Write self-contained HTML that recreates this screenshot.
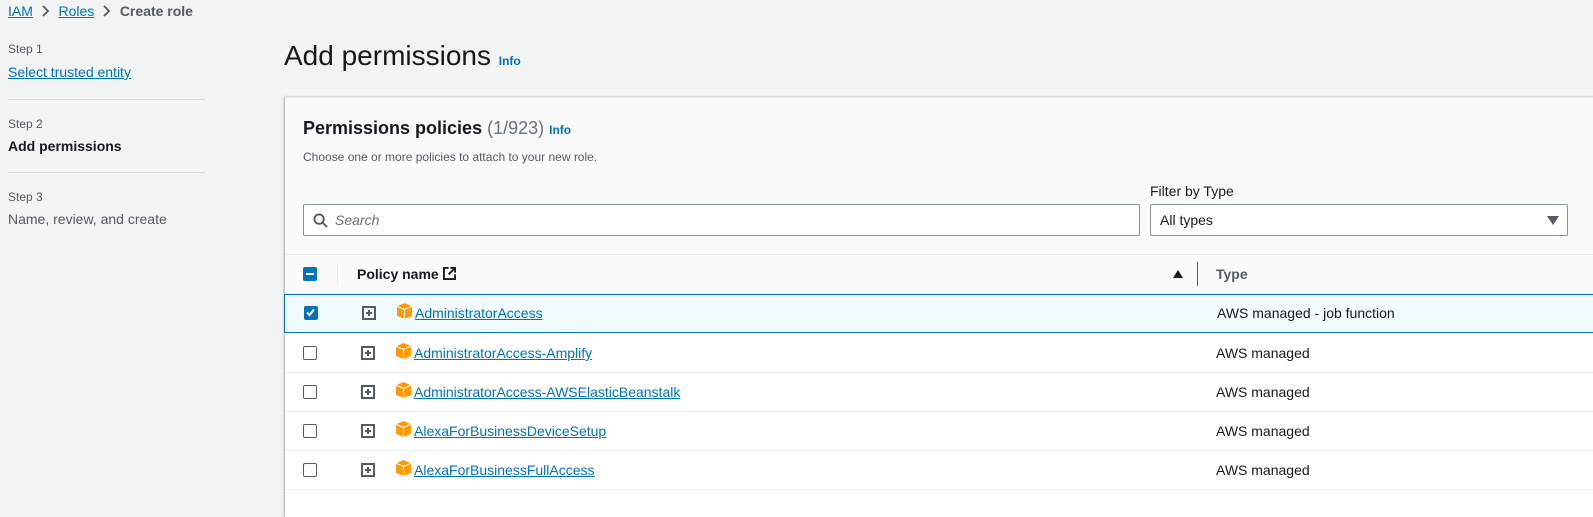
<!DOCTYPE html>
<html><head><meta charset="utf-8"><style>
*{box-sizing:border-box;margin:0;padding:0}
body{width:1593px;height:494px;overflow:hidden;background:#f2f3f3;font-family:"Liberation Sans",sans-serif;color:#16191f;position:relative}
a{color:#0073bb;text-decoration:underline}
.abs{position:absolute}
.bc{top:3px;left:8px;font-size:14px;color:#545b64}
.step{font-size:12px;color:#545b64;left:8px}
.side-hr{left:8px;width:197px;height:1px;background:#d5dbdb}
h1{position:absolute;left:284px;top:40px;font-size:28px;font-weight:400;color:#16191f}
.info{color:#0073bb;font-weight:700;font-size:12px}
.panel{left:285px;top:97px;width:1320px;height:420px;background:#fff;box-shadow:-1px 0 2px rgba(0,28,36,.3);border-top:1px solid #eaeded}
.phead{left:0;top:0;width:100%;height:156px;background:#fafafa}
.input{background:#fff;border:1px solid #879596;border-radius:2px;height:32px}
.th{top:156px;left:0;width:100%;height:40px;background:#fafafa;border-bottom:1px solid #eaeded;border-top:1px solid #eaeded}
.row{left:0;width:100%;height:39px;border-bottom:1px solid #eaeded;font-size:14px}
.row .cb{position:absolute;left:18px;top:12px;width:14px;height:14px;border:1.5px solid #545b64;border-radius:2px;background:#fff}
.row .pl{position:absolute;left:76px;top:12px}
.row .cube{position:absolute;left:110px;top:8px}
.row a{position:absolute;left:129px;top:11px}
.row .t{position:absolute;left:931px;top:11px}
</style></head><body>
<div class="abs bc"><a style="color:#0073bb">IAM</a>&nbsp; <svg width="10" height="12" viewBox="0 0 10 12" style="vertical-align:-1px"><path d="M2 1l5 5-5 5" fill="none" stroke="#545b64" stroke-width="1.8"/></svg>&nbsp; <a>Roles</a>&nbsp; <svg width="10" height="12" viewBox="0 0 10 12" style="vertical-align:-1px"><path d="M2 1l5 5-5 5" fill="none" stroke="#545b64" stroke-width="1.8"/></svg>&nbsp; <b style="color:#545b64">Create role</b></div>
<div class="abs step" style="top:42px">Step 1</div>
<div class="abs" style="top:64px;left:8px;font-size:14px"><a>Select trusted entity</a></div>
<div class="abs side-hr" style="top:99px"></div>
<div class="abs step" style="top:117px">Step 2</div>
<div class="abs" style="top:138px;left:8px;font-size:14px;font-weight:700">Add permissions</div>
<div class="abs side-hr" style="top:172px"></div>
<div class="abs step" style="top:190px">Step 3</div>
<div class="abs" style="top:211px;left:8px;font-size:14px;color:#545b64">Name, review, and create</div>
<h1>Add permissions <span class="info">Info</span></h1>
<div class="abs panel">
 <div class="abs phead">
  <div class="abs" style="left:18px;top:20px;font-size:18px;font-weight:700">Permissions policies <span style="font-weight:400;color:#687078">(1/923)</span> <span class="info">Info</span></div>
  <div class="abs" style="left:18px;top:52px;font-size:12px;color:#545b64">Choose one or more policies to attach to your new role.</div>
  <div class="abs input" style="left:18px;top:106px;width:837px"><svg class="abs" style="left:9px;top:8px" width="15" height="15" viewBox="0 0 16 16"><circle cx="6.5" cy="6.5" r="5" fill="none" stroke="#545b64" stroke-width="2"/><path d="M10 10l5 5" stroke="#545b64" stroke-width="2"/></svg><span class="abs" style="left:31px;top:7px;font-size:14px;font-style:italic;color:#687078">Search</span></div>
  <div class="abs" style="left:865px;top:85px;font-size:14px">Filter by Type</div>
  <div class="abs input" style="left:865px;top:106px;width:418px"><span class="abs" style="left:9px;top:7px;font-size:14px">All types</span><span class="abs" style="right:8px;top:11px;width:0;height:0;border-left:6px solid transparent;border-right:6px solid transparent;border-top:9px solid #545b64"></span></div>
 </div>
 <div class="abs th">
  <div class="abs" style="left:18px;top:12px;width:14px;height:14px;background:#0073bb;border-radius:2px"><div style="position:absolute;left:3px;top:6px;width:8px;height:2px;background:#fff"></div></div>
  <div class="abs" style="left:52px;top:8px;width:1px;height:22px;background:#eaeded"></div>
  <div class="abs" style="left:72px;top:11px;font-size:14px;font-weight:700">Policy name <svg width="13" height="13" viewBox="0 0 14 14" style="vertical-align:-1px"><path d="M6 1H1v12h12V8M8 1h5v5M13 1L6 8" fill="none" stroke="#16191f" stroke-width="2"/></svg></div>
  <div class="abs" style="left:888px;top:15px;width:0;height:0;border-left:5px solid transparent;border-right:5px solid transparent;border-bottom:8px solid #16191f"></div>
  <div class="abs" style="left:912px;top:7px;width:1px;height:24px;background:#545b64"></div>
  <div class="abs" style="left:931px;top:11px;font-size:14px;font-weight:700;color:#545b64">Type</div>
 </div>
 <div class="abs row" style="top:196px;background:#f1faff;border:1px solid #0073bb;left:-1px;width:1321px">
  <div class="cb" style="background:#0073bb;border-color:#0073bb;left:19px;top:11px"><svg style="position:absolute;left:0;top:0" width="11" height="11" viewBox="0 0 11 11"><path d="M2 5.5l2.5 2.5 4.5-5.5" fill="none" stroke="#fff" stroke-width="2"/></svg></div>
  <svg class="pl" style="left:77px;top:11px" width="14" height="14" viewBox="0 0 14 14"><rect x="1" y="1" width="12" height="12" fill="none" stroke="#545b64" stroke-width="2"/><path d="M4 7h6M7 4v6" stroke="#545b64" stroke-width="2"/></svg>
  <svg class="cube" style="left:111px;top:7px" width="17" height="17" viewBox="0 0 16 16"><path d="M8 1l7 3v9l-7 3-7-3V4z" fill="#f90"/><path d="M1 4l7 3 7-3M8 7v9" stroke="#fff" stroke-width="1" fill="none"/></svg>
  <a style="left:130px;top:10px">AdministratorAccess</a><span class="t" style="left:932px;top:10px">AWS managed - job function</span>
 </div>
 <div class="abs row" style="top:236px"><div class="cb"></div><svg class="pl" width="14" height="14" viewBox="0 0 14 14"><rect x="1" y="1" width="12" height="12" fill="none" stroke="#545b64" stroke-width="2"/><path d="M4 7h6M7 4v6" stroke="#545b64" stroke-width="2"/></svg><svg class="cube" width="17" height="17" viewBox="0 0 16 16"><path d="M8 1l7 3v9l-7 3-7-3V4z" fill="#f90"/><path d="M1 4l7 3 7-3M8 7v9" stroke="#fff" fill="none"/></svg><a>AdministratorAccess-Amplify</a><span class="t">AWS managed</span></div>
 <div class="abs row" style="top:275px"><div class="cb"></div><svg class="pl" width="14" height="14" viewBox="0 0 14 14"><rect x="1" y="1" width="12" height="12" fill="none" stroke="#545b64" stroke-width="2"/><path d="M4 7h6M7 4v6" stroke="#545b64" stroke-width="2"/></svg><svg class="cube" width="17" height="17" viewBox="0 0 16 16"><path d="M8 1l7 3v9l-7 3-7-3V4z" fill="#f90"/><path d="M1 4l7 3 7-3M8 7v9" stroke="#fff" fill="none"/></svg><a>AdministratorAccess-AWSElasticBeanstalk</a><span class="t">AWS managed</span></div>
 <div class="abs row" style="top:314px"><div class="cb"></div><svg class="pl" width="14" height="14" viewBox="0 0 14 14"><rect x="1" y="1" width="12" height="12" fill="none" stroke="#545b64" stroke-width="2"/><path d="M4 7h6M7 4v6" stroke="#545b64" stroke-width="2"/></svg><svg class="cube" width="17" height="17" viewBox="0 0 16 16"><path d="M8 1l7 3v9l-7 3-7-3V4z" fill="#f90"/><path d="M1 4l7 3 7-3M8 7v9" stroke="#fff" fill="none"/></svg><a>AlexaForBusinessDeviceSetup</a><span class="t">AWS managed</span></div>
 <div class="abs row" style="top:353px"><div class="cb"></div><svg class="pl" width="14" height="14" viewBox="0 0 14 14"><rect x="1" y="1" width="12" height="12" fill="none" stroke="#545b64" stroke-width="2"/><path d="M4 7h6M7 4v6" stroke="#545b64" stroke-width="2"/></svg><svg class="cube" width="17" height="17" viewBox="0 0 16 16"><path d="M8 1l7 3v9l-7 3-7-3V4z" fill="#f90"/><path d="M1 4l7 3 7-3M8 7v9" stroke="#fff" fill="none"/></svg><a>AlexaForBusinessFullAccess</a><span class="t">AWS managed</span></div>
</div>
</body></html>
